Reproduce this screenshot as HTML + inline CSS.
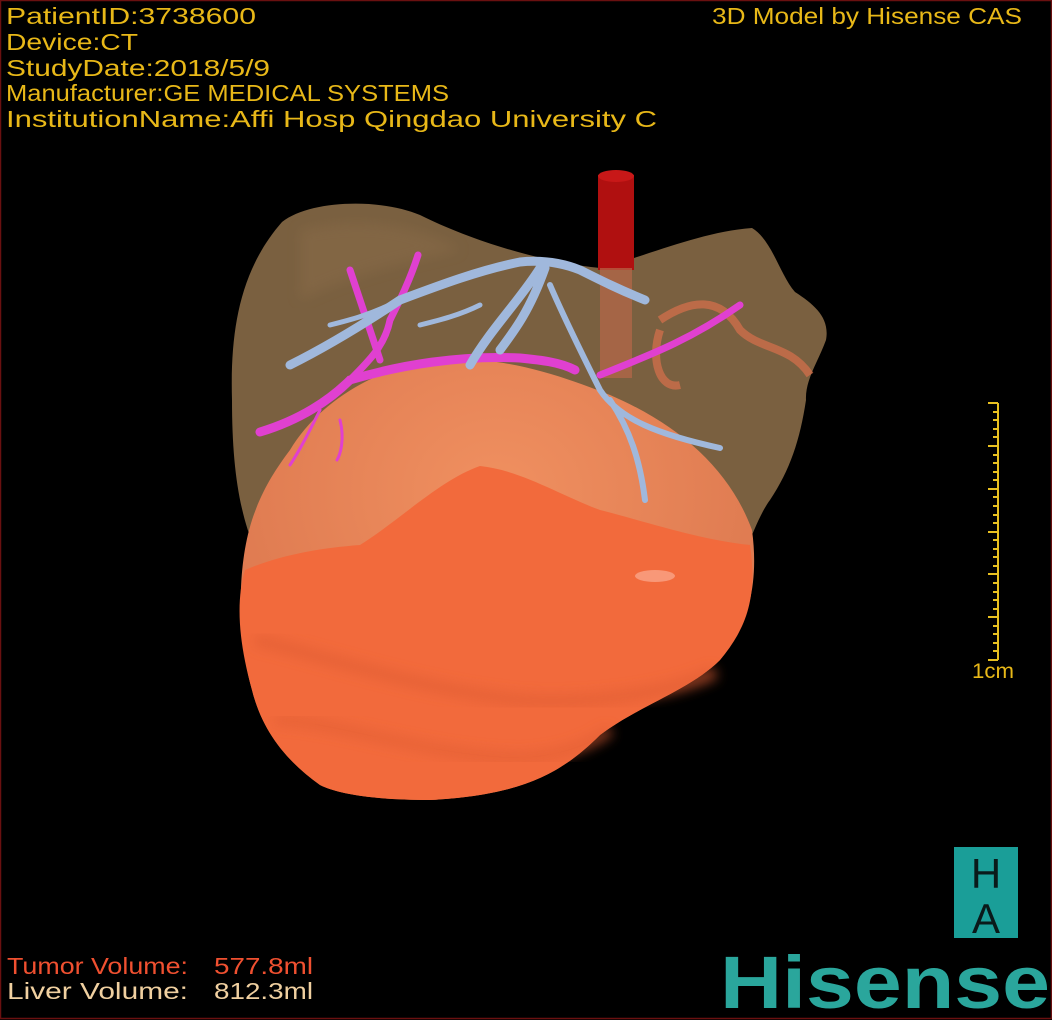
<!DOCTYPE html>
<html><head><meta charset="utf-8"><style>
html,body{margin:0;padding:0;background:#000;}
svg{display:block}
</style></head><body>
<svg width="1052" height="1020" viewBox="0 0 1052 1020" xmlns="http://www.w3.org/2000/svg">
<defs>
<filter id="b6"><feGaussianBlur stdDeviation="6"/></filter>
<radialGradient id="tg" cx="0.5" cy="0.3" r="0.7">
<stop offset="0" stop-color="#f09060"/><stop offset="1" stop-color="#d9744c"/></radialGradient>
</defs>
<rect x="0" y="0" width="1052" height="1020" fill="#000"/>
<rect x="0.5" y="0.5" width="1051" height="1018" fill="none" stroke="#6a1010" stroke-width="1.5"/>
<!-- liver -->
<path d="M282,222 C310,200 380,198 420,215 C470,240 540,262 600,268 C650,255 700,232 752,228 C772,240 780,275 795,292 C815,305 830,318 826,340 C818,362 805,380 806,400 C800,440 790,470 770,500 C755,520 745,560 720,600 L400,600 L260,560 C240,520 232,470 232,400 C230,330 240,270 282,222 Z" fill="#7a6040"/>
<path d="M300,230 C360,215 420,225 460,250 C420,260 360,270 300,300 Z" fill="#8a6c48" opacity="0.5" filter="url(#b6)"/>
<!-- vena cava -->
<rect x="598" y="175" width="36" height="95" fill="#b01010"/>
<ellipse cx="616" cy="176" rx="18" ry="6" fill="#c81818"/>
<rect x="600" y="268" width="32" height="110" fill="#b86848" opacity="0.7"/>
<path d="M660,320 C690,300 720,295 740,330 C760,350 790,345 810,375 M660,330 C650,360 660,390 680,385" stroke="#d8704c" stroke-width="8" fill="none" opacity="0.7"/>
<!-- tumor -->
<path d="M290,450 C320,400 380,365 440,360 C500,355 560,375 610,395 C680,425 730,470 752,530 C760,590 745,630 720,660 C690,690 640,705 600,735 C560,775 520,795 430,800 C380,800 340,795 320,785 C285,760 262,730 252,690 C238,640 236,570 252,520 C262,490 275,470 290,450 Z" fill="url(#tg)"/>
<path d="M245,570 C280,555 320,548 360,545 C400,520 440,480 480,466 C520,470 560,495 600,510 C640,520 700,540 750,545 C758,600 745,630 720,660 C690,690 640,705 600,735 C560,775 520,795 430,800 C380,800 340,795 320,785 C285,760 262,730 252,690 C238,640 236,600 245,570 Z" fill="#f26a3c"/>
<path d="M255,640 C320,655 420,690 520,700 C600,705 680,690 715,672" stroke="#e25e34" stroke-width="12" fill="none" filter="url(#b6)" opacity="0.7"/>
<path d="M275,720 C340,722 420,755 520,758 C560,756 590,745 610,730" stroke="#e25e34" stroke-width="10" fill="none" filter="url(#b6)" opacity="0.7"/>
<ellipse cx="655" cy="576" rx="20" ry="6" fill="#f89878"/>
<!-- portal (pink) -->
<g stroke="#e040d0" fill="none" stroke-linecap="round">
<path d="M260,432 C300,420 330,400 350,380 C400,365 460,355 520,358 C540,360 560,362 575,370" stroke-width="9"/>
<path d="M350,380 C370,360 385,345 390,320 M380,360 C370,330 360,300 350,270 M390,320 C400,300 410,280 418,255" stroke-width="7"/>
<path d="M600,375 C650,355 690,340 740,305" stroke-width="7"/>
<path d="M320,410 C310,430 300,450 290,465 M340,420 C345,440 340,455 337,460" stroke-width="3"/>
</g>
<!-- hepatic (blue) -->
<g stroke="#a0b8dc" fill="none" stroke-linecap="round">
<path d="M290,365 C330,345 370,320 400,300 C440,285 480,270 520,262 C540,260 560,262 580,270 C600,280 620,290 645,300" stroke-width="9"/>
<path d="M540,268 C520,300 490,330 470,365 M545,268 C530,310 515,330 500,350" stroke-width="9"/>
<path d="M550,285 C565,320 585,360 600,390 C620,420 660,435 720,448 M610,400 C630,430 640,460 645,500" stroke-width="6"/>
<path d="M330,325 C350,320 370,315 400,300 M420,325 C440,320 460,315 480,305" stroke-width="5"/>
</g>
<!-- text -->
<g font-family="'Liberation Sans', sans-serif" font-size="23" fill="#e8b818">
<text x="6" y="24" textLength="250" lengthAdjust="spacingAndGlyphs">PatientID:3738600</text>
<text x="6" y="50" textLength="132" lengthAdjust="spacingAndGlyphs">Device:CT</text>
<text x="6" y="76" textLength="264" lengthAdjust="spacingAndGlyphs">StudyDate:2018/5/9</text>
<text x="6" y="101" textLength="443" lengthAdjust="spacingAndGlyphs">Manufacturer:GE MEDICAL SYSTEMS</text>
<text x="6" y="127" textLength="651" lengthAdjust="spacingAndGlyphs">InstitutionName:Affi Hosp Qingdao University C</text>
<text x="712" y="24" textLength="310" lengthAdjust="spacingAndGlyphs">3D Model by Hisense CAS</text>
<text x="972" y="678" font-size="21" textLength="42" lengthAdjust="spacingAndGlyphs">1cm</text>
</g>
<g font-family="'Liberation Sans', sans-serif" font-size="23">
<text x="7" y="974" fill="#f05030" textLength="181" lengthAdjust="spacingAndGlyphs">Tumor Volume:</text>
<text x="214" y="974" fill="#f05030" textLength="99" lengthAdjust="spacingAndGlyphs">577.8ml</text>
<text x="7" y="999" fill="#f0d0a0" textLength="181" lengthAdjust="spacingAndGlyphs">Liver Volume:</text>
<text x="214" y="999" fill="#f0d0a0" textLength="99" lengthAdjust="spacingAndGlyphs">812.3ml</text>
</g>
<!-- ruler -->
<g stroke="#e8c020" stroke-width="2">
<line x1="998" y1="403" x2="998" y2="660"/>
<path d="M988,403H998M988,446H998M988,489H998M988,532H998M988,574H998M988,617H998M988,660H998
M993,412H998M993,420H998M993,429H998M993,437H998M993,455H998M993,463H998M993,472H998M993,480H998M993,497H998M993,506H998M993,515H998M993,523H998M993,540H998M993,549H998M993,557H998M993,566H998M993,583H998M993,592H998M993,600H998M993,609H998M993,626H998M993,634H998M993,643H998M993,651H998"/>
</g>
<!-- HA logo -->
<rect x="954" y="847" width="64" height="91" fill="#1a9e98"/>
<g font-family="'Liberation Sans', sans-serif" font-size="42" fill="#0a1a1a" text-anchor="middle">
<text x="986" y="888">H</text><text x="986" y="933">A</text>
</g>
<text x="720" y="1008" font-family="'Liberation Sans', sans-serif" font-weight="bold" font-size="74" fill="#2aa69c" textLength="330" lengthAdjust="spacingAndGlyphs">Hisense</text>
</svg>
</body></html>
